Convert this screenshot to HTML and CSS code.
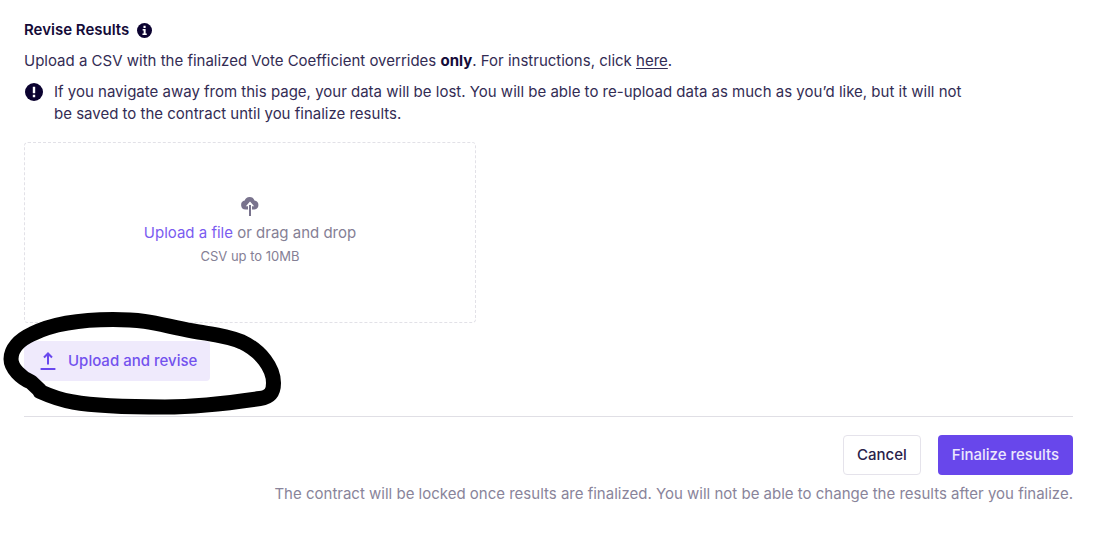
FILE: index.html
```html
<!DOCTYPE html>
<html lang="en">
<head>
<meta charset="utf-8">
<meta name="viewport" content="width=device-width, initial-scale=1">
<title>Revise Results</title>
<link rel="stylesheet" href="styles.css">
</head>
<body>
<main class="page">
  <h1 class="title">Revise Results
    <svg class="title-icon" viewBox="0 0 16 16" aria-hidden="true"><circle cx="8" cy="8" r="8" fill="#0b0230"/><path d="M6.9 2.9h2.3v2.3H6.9zM6 6.4h3.2v4.7h1.2v1.7H5.8v-1.7h1.3V8.1H6z" fill="#fff"/></svg>
  </h1>
  <p class="intro">Upload a CSV with the finalized Vote Coefficient overrides <strong>only</strong>. For instructions, click <a class="link" href="#">here</a>.</p>
  <div class="notice">
    <svg class="notice-icon" viewBox="0 0 18 18" aria-hidden="true"><circle cx="9" cy="9" r="9" fill="#0b0230"/><path d="M7.8 3.8h2.4v6.4H7.8zM7.8 11.8h2.4v2.4H7.8z" fill="#fff"/></svg>
    <p class="notice-text">If you navigate away from this page, your data will be lost. You will be able to re-upload data as much as you’d like, but it will not be saved to the contract until you finalize results.</p>
  </div>
  <div class="dropzone">
    <svg class="cloud" viewBox="0 0 18 20" aria-hidden="true"><path d="M4.500 13.500A4.500 4.500 0 0 1 3.700 4.600A5.200 5.200 0 0 1 13.500 4.400A4.600 4.600 0 0 1 13.500 13.500Z" fill="#79738d"/><path d="M9 5.600L13.200 10.200H11V14H7V10.200H4.800Z" fill="#fff"/><path d="M9 9v11" stroke="#79738d" stroke-width="2"/></svg>
    <p class="drop-line"><label class="file-label" for="file">Upload a file</label><input class="file-input" id="file" type="file" accept=".csv"> or drag and drop</p>
    <p class="hint">CSV up to 10MB</p>
  </div>
  <div class="revise">
    <button class="button button-soft" type="button">
      <svg class="upload" viewBox="0 0 16 18" aria-hidden="true"><path d="M8 12.5V2M4 5.500 8 1.500l4 4M.6 17h14.8" fill="none" stroke="#6948ee" stroke-width="2"/></svg>
      Upload and revise
    </button>
    <svg class="marker" viewBox="0 305 290 115" aria-hidden="true"><path d="M40 390.500L31 382C21 378 11 368 11 359C11 349 19 340 32 334C54 323 85 319.500 113 319.500C150 319.500 160 325 193 331C216 335 228 336 242 342C261 351 273.500 368 273.500 383C273.500 391 271 397 260 398.500C230 403 200 407 165 407C130 407 95 406 73 402C60 400 50 396 40 391.500" fill="none" stroke="#000" stroke-width="15" stroke-linecap="round" stroke-linejoin="round"/></svg>
  </div>
  <footer class="footer">
    <div class="actions">
      <button class="button button-outline" type="button">Cancel</button>
      <button class="button button-primary" type="button">Finalize results</button>
    </div>
    <p class="footnote">The contract will be locked once results are finalized. You will not be able to change the results after you finalize.</p>
  </footer>
</main>
</body>
</html>
```
FILE: styles.css
```css
* { box-sizing: border-box; }
body {
  margin: 0;
  background: #fff;
  color: #332c54;
  font: 15px/22px Inter, "Liberation Sans", sans-serif;
}
p, h1 { margin: 0; }
.page { padding: 19px 43px 32px 24px; }
.title {
  display: flex;
  align-items: center;
  gap: 8px;
  color: #140b38;
  font-size: 15px;
  font-weight: 600;
}
.title-icon { width: 15px; height: 15px; }
.intro { margin-top: 9px; }
.intro strong { color: #140b38; }
.link { color: inherit; text-underline-offset: 2px; }
.notice {
  display: flex;
  gap: 11px;
  max-width: 940px;
  margin-top: 9px;
  padding-left: 1px;
}
.notice-icon { flex: none; width: 18px; height: 18px; margin-top: 2px; }
.dropzone {
  display: flex;
  flex-direction: column;
  align-items: center;
  max-width: 452px;
  margin-top: 17px;
  padding: 53px 16px 55px;
  border: 1px dashed #e2e1e7;
  border-radius: 4px;
  color: #858095;
}
.cloud { width: 18px; height: 20px; }
.drop-line { margin-top: 6px; }
.file-label { color: #7b5cf0; cursor: pointer; }
.file-input {
  position: absolute;
  width: 1px;
  height: 1px;
  opacity: 0;
}
.hint { margin-top: 1px; font-size: 13px; }
.revise { position: relative; margin-top: 18px; }
.marker {
  position: absolute;
  top: -36px;
  left: -24px;
  width: 290px;
  height: 115px;
  pointer-events: none;
}
.button {
  display: inline-flex;
  align-items: center;
  height: 40px;
  padding: 0 13px;
  border: 1px solid transparent;
  border-radius: 4px;
  font: inherit;
  font-weight: 500;
}
.button-soft {
  gap: 12px;
  padding: 0 12px 0 15px;
  background: #efeafc;
  color: #7352ee;
}
.upload { width: 16px; height: 18px; }
.button-outline { border-color: #e5e3eb; background: #fff; color: #29214a; }
.button-primary { background: #6847eb; color: #ece7fd; }
.footer {
  margin-top: 35px;
  padding-top: 18px;
  border-top: 1px solid #e0dfe5;
}
.actions { display: flex; justify-content: flex-end; gap: 17px; }
.footnote { margin-top: 8px; color: #89849a; text-align: right; }
```
